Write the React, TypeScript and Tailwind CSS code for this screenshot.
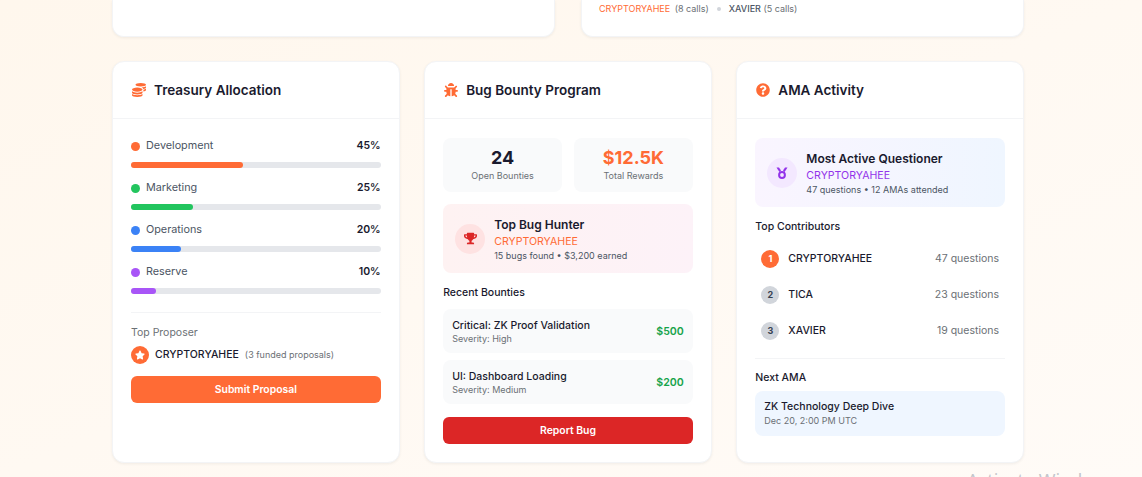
import React from "react";
import {FaCoins, FaBug, FaQuestionCircle, FaTrophy, FaStar} from "react-icons/fa";

const allocations = [
    {label: "Development", pct: 45, dot: "bg-[#ff6b35]"},
    {label: "Marketing", pct: 25, dot: "bg-[#22c55e]"},
    {label: "Operations", pct: 20, dot: "bg-[#3b82f6]"},
    {label: "Reserve", pct: 10, dot: "bg-[#a855f7]"},
];

const bounties = [
    {title: "Critical: ZK Proof Validation", severity: "Severity: High", reward: "$500"},
    {title: "UI: Dashboard Loading", severity: "Severity: Medium", reward: "$200"},
];

const contributors = [
    {rank: 1, name: "CRYPTORYAHEE", count: "47 questions", badge: "bg-[#ff6b35] text-white"},
    {rank: 2, name: "TICA", count: "23 questions", badge: "bg-[#d1d5db] text-[#374151]"},
    {rank: 3, name: "XAVIER", count: "19 questions", badge: "bg-[#d1d5db] text-[#374151]"},
];

function MedalIcon() {
    return (
        <svg width="12" height="12" viewBox="0 0 12 12" fill="currentColor">
            <polygon points="0.5,0.5 3,0.5 5,3.6 3.4,5"/>
            <polygon points="11.5,0.5 9,0.5 7,3.6 8.6,5"/>
            <circle cx="6" cy="8" r="2.9" fill="none" stroke="currentColor" strokeWidth="2"/>
        </svg>
    );
}

function Card({icon, title, children}: {
    icon: React.ReactNode;
    title: string;
    children: React.ReactNode;
}) {
    return (
        <div className="bg-white rounded-xl border border-[#f3f4f6] shadow-[0_1px_3px_rgba(0,0,0,0.06)] h-[402px]">
            <div className="h-[57px] pl-[18px] pr-[18px] flex items-center gap-[7px] border-b border-[#f3f4f6]">
                <span className="w-[16px] flex justify-center text-[#ff6b35] text-[14px]">{icon}</span>
                <h3 className="text-[13.5px] font-semibold text-[#1a1a2e]">{title}</h3>
            </div>
            <div className="pl-[18px] pr-[18px] pt-[19px]">
                {children}
            </div>
        </div>
    );
}

function Treasury() {
    return (
        <Card icon={<FaCoins/>} title="Treasury Allocation">
            <div className="flex flex-col gap-[12px]">
                {allocations.map(a => (
                    <div key={a.label}>
                        <div className="flex items-center justify-between h-[16px] mb-[8px]">
                            <div className="flex items-center gap-[6px]">
                                <span className={`w-[9px] h-[9px] rounded-full ${a.dot}`}/>
                                <span className="text-[10.8px] text-[#4b5563]">{a.label}</span>
                            </div>
                            <span className="text-[10.5px] font-semibold text-[#1a1a2e]">{a.pct}%</span>
                        </div>
                        <div className="h-[6px] rounded-full bg-[#e5e7eb]">
                            <div className={`h-[6px] rounded-full ${a.dot}`} style={{width: `${a.pct}%`}}/>
                        </div>
                    </div>
                ))}
            </div>
            <div className="mt-[18px] pt-[13px] border-t border-[#f3f4f6]">
                <div className="text-[10.5px] text-[#6b7075] leading-[14px]">Top Proposer</div>
                <div className="mt-[6px] flex items-center gap-[6px]">
                    <span className="w-[18px] h-[18px] rounded-full bg-[#ff6b35] flex items-center justify-center text-white text-[10px]">
                        <FaStar/>
                    </span>
                    <span className="text-[10.5px] font-medium text-[#1a1a2e]">CRYPTORYAHEE</span>
                    <span className="text-[9px] text-[#6b7075]">(3 funded proposals)</span>
                </div>
                <button className="mt-[12px] w-full h-[27px] rounded-md bg-[#ff6b35] text-white text-[10.4px] font-semibold">
                    Submit Proposal
                </button>
            </div>
        </Card>
    );
}

function BugBounty() {
    return (
        <Card icon={<FaBug/>} title="Bug Bounty Program">
            <div className="grid grid-cols-2 gap-[12px]">
                <div className="h-[54px] rounded-lg bg-[#f9fafb] flex flex-col items-center justify-center">
                    <div className="text-[18px] leading-[20px] mb-[2px] font-bold text-[#1a1a2e]">24</div>
                    <div className="text-[9px] leading-[12px] text-[#6b7075]">Open Bounties</div>
                </div>
                <div className="h-[54px] rounded-lg bg-[#f9fafb] flex flex-col items-center justify-center">
                    <div className="text-[18px] leading-[20px] mb-[2px] font-bold text-[#ff6b35]">$12.5K</div>
                    <div className="text-[9px] leading-[12px] text-[#6b7075]">Total Rewards</div>
                </div>
            </div>
            <div className="mt-[12px] h-[69px] rounded-lg bg-gradient-to-r from-[#fef2f2] to-[#fdf2f8] flex items-center gap-[9px] px-[12px]">
                <span className="w-[30px] h-[30px] rounded-full bg-[#fee2e2] flex items-center justify-center text-[#dc2626] text-[13px]">
                    <FaTrophy/>
                </span>
                <div className="pt-[2px]">
                    <div className="text-[12px] leading-[16px] font-semibold text-[#1a1a2e]">Top Bug Hunter</div>
                    <div className="text-[10.6px] leading-[17px] text-[#ff6b35]">CRYPTORYAHEE</div>
                    <div className="text-[9px] leading-[12px] text-[#4b5563]">15 bugs found • $3,200 earned</div>
                </div>
            </div>
            <div className="mt-[13px] text-[10.5px] leading-[14px] font-medium text-[#1a1a2e]">Recent Bounties</div>
            <div className="mt-[9px] flex flex-col gap-[7px]">
                {bounties.map(b => (
                    <div key={b.title} className="h-[44px] rounded-lg bg-[#f9fafb] px-[9px] flex items-center justify-between">
                        <div className="pt-[1px]">
                            <div className="text-[10.5px] leading-[14px] font-medium text-[#1a1a2e]">{b.title}</div>
                            <div className="text-[9px] leading-[12px] text-[#6b7075]">{b.severity}</div>
                        </div>
                        <span className="pt-[2px] text-[10.6px] font-semibold text-[#16a34a]">{b.reward}</span>
                    </div>
                ))}
            </div>
            <button className="mt-[13px] w-full h-[27px] rounded-md bg-[#dc2626] text-white text-[10.4px] font-semibold">
                Report Bug
            </button>
        </Card>
    );
}

function AmaActivity() {
    return (
        <Card icon={<FaQuestionCircle/>} title="AMA Activity">
            <div className="h-[69px] rounded-lg bg-gradient-to-r from-[#faf5ff] to-[#eff6ff] flex items-center gap-[9px] px-[12px]">
                <span className="w-[30px] h-[30px] rounded-full bg-[#f3e8ff] flex items-center justify-center text-[#9333ea]">
                    <MedalIcon/>
                </span>
                <div className="pt-[2px]">
                    <div className="text-[12px] leading-[16px] font-semibold text-[#1a1a2e]">Most Active Questioner</div>
                    <div className="text-[10.6px] leading-[17px] text-[#9333ea]">CRYPTORYAHEE</div>
                    <div className="text-[9px] leading-[12px] text-[#4b5563]">47 questions • 12 AMAs attended</div>
                </div>
            </div>
            <div className="mt-[13px] text-[10.5px] leading-[14px] font-medium text-[#1a1a2e]">Top Contributors</div>
            <div className="mt-[7px] flex flex-col">
                {contributors.map(c => (
                    <div key={c.rank} className="h-[36px] px-[6px] flex items-center justify-between">
                        <div className="flex items-center gap-[9px]">
                            <span className={`w-[18px] h-[18px] rounded-full flex items-center justify-center text-[9px] font-bold ${c.badge}`}>{c.rank}</span>
                            <span className="text-[10.5px] font-medium text-[#1a1a2e]">{c.name}</span>
                        </div>
                        <span className="text-[10.5px] text-[#6b7075]">{c.count}</span>
                    </div>
                ))}
            </div>
            <div className="mt-[9px] pt-[12px] border-t border-[#f3f4f6]">
                <div className="text-[10.5px] leading-[14px] font-medium text-[#1a1a2e]">Next AMA</div>
                <div className="mt-[6px] h-[45px] rounded-lg bg-[#eff6ff] px-[9px] flex flex-col justify-center">
                    <div className="text-[10.5px] leading-[14px] font-medium text-[#1a1a2e]">ZK Technology Deep Dive</div>
                    <div className="text-[9px] leading-[13px] text-[#6b7075]">Dec 20, 2:00 PM UTC</div>
                </div>
            </div>
        </Card>
    );
}

export default function App() {
    return (
        <div className="relative h-[477px] overflow-hidden bg-gradient-to-br from-[#fff7ed] to-[#fffbf7] font-['Inter',sans-serif]">
            <div className="w-[912px] ml-[112px]">
                <div className="grid grid-cols-2 gap-[26px] h-[37px]">
                    <div className="bg-white rounded-b-xl border-b border-x border-[#f3f4f6] shadow-[0_1px_3px_rgba(0,0,0,0.06)]"/>
                    <div className="bg-white rounded-b-xl border-b border-x border-[#f3f4f6] shadow-[0_1px_3px_rgba(0,0,0,0.06)] px-[17px] pt-[2px] flex items-start gap-[8px] text-[9px] leading-[13px] text-[#6b7075]">
                        <span><span className="text-[#ff6b35] mr-[2px]">CRYPTORYAHEE</span> (8 calls)</span>
                        <span className="w-[4px] h-[4px] mt-[5px] rounded-full bg-[#d1d5db]"/>
                        <span><span className="text-[#4b5563] font-medium">XAVIER</span> (5 calls)</span>
                    </div>
                </div>
                <div className="mt-[24px] grid grid-cols-3 gap-[24.5px]">
                    <Treasury/>
                    <BugBounty/>
                    <AmaActivity/>
                </div>
            </div>
            {/* windows watermark, cut off by the bottom edge */}
            <div className="absolute left-[967px] top-[468px] text-[18px] leading-[24px] whitespace-nowrap text-[#9ca3af]/60 font-['Noto_Sans',sans-serif]">
                Activate Windows
            </div>
        </div>
    );
}
